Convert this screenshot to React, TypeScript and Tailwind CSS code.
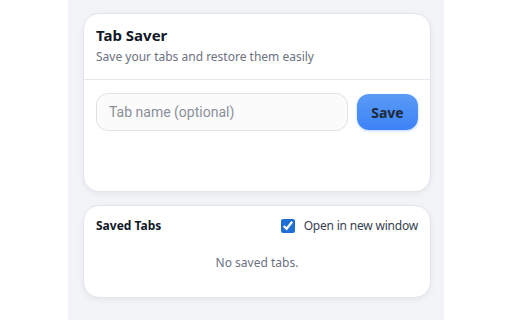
import React, { useState } from 'react';

export default function App() {
  const [name, setName] = useState('');
  const [newWindow, setNewWindow] = useState(true);

  return (
    <div className="flex h-[320px] w-full justify-center bg-white font-['Noto_Sans',sans-serif]">
      <div className="flex w-[376px] flex-col gap-[13px] bg-[#f3f4f7] pl-[15px] pr-[13px] pt-[13px]">
        <div className="flex h-[179px] flex-col rounded-2xl border border-[#e3e5ea] bg-white shadow-[0_2px_6px_rgba(0,0,0,0.06)]">
          <div className="border-b border-[#e6e8ec] px-[12px] pb-[14px] pt-[11px]">
            <h1 className="text-[15px] font-bold leading-[20px] text-[#111827]">Tab Saver</h1>
            <p className="mt-[4px] text-[12px] leading-[16px] text-[#6b7280]">Save your tabs and restore them easily</p>
          </div>
          <div className="flex items-center gap-[9px] px-[12px] pt-[13px]">
            <input
              value={name}
              onChange={(e) => setName(e.target.value)}
              placeholder="Tab name (optional)"
              className="h-[38px] flex-1 rounded-xl border border-[#dfe2e7] bg-[#fbfbfc] px-[12px] font-['Roboto',sans-serif] text-[14px] text-[#111827] placeholder:text-[#8a8f98] focus:outline-none"
            />
            <button className="h-[36px] w-[61px] rounded-xl bg-gradient-to-b from-[#5a9bf6] to-[#3b82f6] text-[14px] font-bold text-[#1f2937] shadow-[0_1px_3px_rgba(59,130,246,0.35)]">
              Save
            </button>
          </div>
        </div>

        <div className="flex h-[93px] flex-col rounded-2xl border border-[#e3e5ea] bg-white px-[12px] pt-[11px] shadow-[0_2px_6px_rgba(0,0,0,0.06)]">
          <div className="flex items-center justify-between">
            <h2 className="text-[12px] font-bold leading-[18px] text-[#111827]">Saved Tabs</h2>
            <label className="flex items-center gap-[9px] text-[12px] leading-[18px] text-[#374151]">
              <input
                type="checkbox"
                checked={newWindow}
                onChange={(e) => setNewWindow(e.target.checked)}
                className="h-[14px] w-[14px] accent-[#1d6fd6]"
              />
              <span className="tracking-[-0.2px]">Open in new window</span>
            </label>
          </div>
          <p className="mt-[20px] text-center text-[12px] leading-[16px] text-[#6b7280]">No saved tabs.</p>
        </div>
      </div>
    </div>
  );
}
